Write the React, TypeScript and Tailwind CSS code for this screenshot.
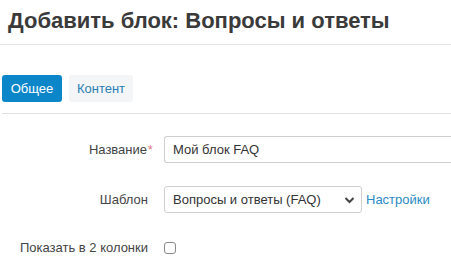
export default function App() {
  return (
    <div className="w-[451px] h-[266px] overflow-hidden bg-white font-['Liberation_Sans',Arial,sans-serif] text-[#333]">
      {/* Header */}
      <div className="h-[45px] border-b border-[#e5e5e5] pl-[8px] pt-[7px]">
        <h1 className="text-[22px] leading-[28px] font-bold text-[#3a3a3a] whitespace-nowrap">
          Добавить блок: Вопросы и ответы
        </h1>
      </div>

      {/* Tabs */}
      <div className="ml-[2px] mt-[30px] pb-[11px] border-b border-[#e0e0e0] flex gap-[7px]">
        <button className="h-[27px] w-[60px] rounded-[3px] bg-[#0b86c8] text-white text-[13px]">
          Общее
        </button>
        <button className="h-[27px] w-[64px] rounded-[3px] bg-[#f4f5f6] text-[#2a7fb5] text-[13px]">
          Контент
        </button>
      </div>

      {/* Form */}
      <div className="mt-[22px] flex flex-col text-[13px]">
        <div className="flex items-center h-[27px]">
          <div className="w-[148px] text-right text-[#444] relative pr-[1px]">
            Название
            <span className="absolute left-[148px] top-[4px] leading-none text-[#e26a7c] text-[12px]">*</span>
          </div>
          <div className="ml-[16px] flex-1 h-[27px] border border-[#cfcfcf] border-r-0 rounded-l-[3px] flex items-center pl-[8px] text-[#333]">
            Мой блок FAQ
          </div>
        </div>

        <div className="flex items-center h-[27px] mt-[23px]">
          <div className="w-[148px] text-right text-[#444]">Шаблон</div>
          <div className="ml-[16px] w-[198px] h-[27px] border border-[#cfcfcf] rounded-[3px] flex items-center pl-[8px] pr-[6px] text-[#333]">
            <span className="flex-1">Вопросы и ответы (FAQ)</span>
            <svg width="11" height="8" viewBox="0 0 11 8" className="text-[#444]">
              <path d="M1.5 2 L5.5 6 L9.5 2" fill="none" stroke="currentColor" strokeWidth="2" />
            </svg>
          </div>
          <span className="ml-[4px] text-[#2a8ac4]">Настройки</span>
        </div>

        <div className="flex items-center h-[20px] mt-[25px]">
          <div className="w-[148px] text-right text-[#444]">Показать в 2 колонки</div>
          <div className="ml-[16px] w-[12px] h-[12px] border border-[#8a8a8a] rounded-[3px]" />
        </div>
      </div>
    </div>
  );
}
